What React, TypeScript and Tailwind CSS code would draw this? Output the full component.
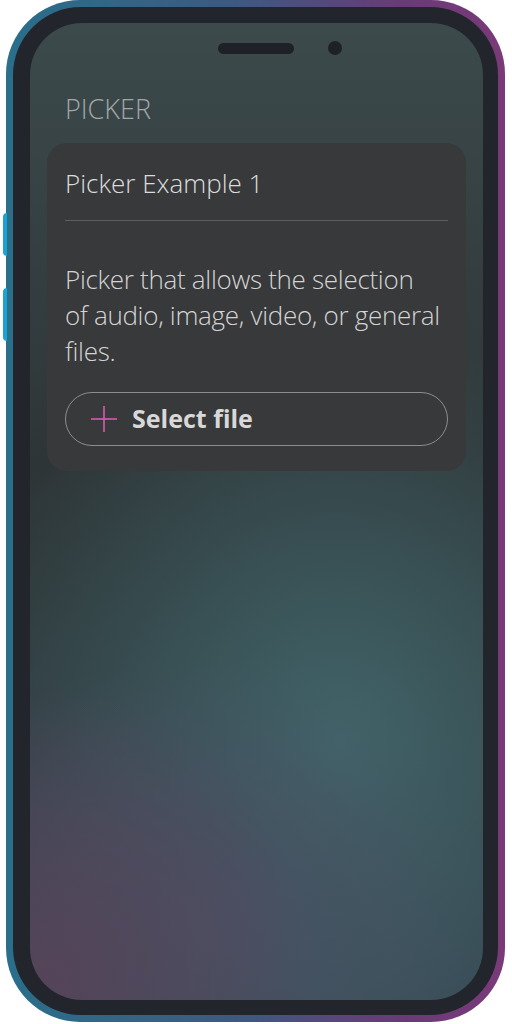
const font = { fontFamily: '"Open Sans", "Noto Sans", sans-serif' };

function PlusIcon() {
  return (
    <svg width="26" height="26" viewBox="0 0 26 26" fill="none" stroke="#d65cb0" strokeWidth="1.6">
      <line x1="13" y1="0" x2="13" y2="26" />
      <line x1="0" y1="13" x2="26" y2="13" />
    </svg>
  );
}

export default function App() {
  return (
    <div className="relative w-[512px] h-[1024px] bg-white" style={font}>
      {/* side buttons */}
      <div className="absolute left-[3px] top-[213px] w-[4px] h-[43px] rounded-l-sm bg-[#1ba3d3]" />
      <div className="absolute left-[3px] top-[288px] w-[4px] h-[53px] rounded-l-sm bg-[#1ba3d3]" />

      <div className="ml-[6px] w-[499px] h-[1022px] rounded-[74px] p-[7px] bg-[linear-gradient(90deg,#2a6f8a_0%,#3b5a82_45%,#6a3a78_80%,#7a3a78_100%)]">
        <div className="w-full h-full rounded-[68px] bg-[#22252c] pl-[17px] pr-[15px] pt-[16px] pb-[15px]">
          <div className="relative w-full h-full rounded-[52px] overflow-hidden bg-[radial-gradient(260px_300px_at_4%_98%,#554459,transparent),radial-gradient(280px_260px_at_38%_92%,#4a5164,transparent),radial-gradient(380px_440px_at_68%_74%,#416469,transparent),linear-gradient(180deg,#3c4a4c_0%,#2e3537_45%,#2f393b_60%,#364350_100%)]">
            <div className="flex items-center pt-[18px]">
              <div className="ml-[188px] w-[76px] h-[11px] rounded-full bg-[#1e2127]" />
              <div className="ml-[34px] w-[14px] h-[14px] rounded-full bg-[#1e2127]" />
            </div>

            <div className="pl-[35px] pt-[38px] text-[27px] leading-[32px] font-light text-[#a3a7a8]">
              PICKER
            </div>

            <div className="mx-[17px] mt-[18px] rounded-[20px] bg-[#38393b] pl-[18px] pr-[18px] pt-[24px] pb-[25px]">
              <div className="text-[26px] leading-[32px] font-light text-[#dcdcdc]">Picker Example 1</div>
              <div className="mt-[21px] h-px bg-[#5c5d5f]" />
              <p className="mt-[40px] text-[26px] leading-[36px] font-light tracking-[-0.3px] text-[#d4d4d4]">
                Picker that allows the selection
                <br />
                of audio, image, video, or general files.
              </p>
              <button className="mt-[23px] flex w-full h-[54px] items-center rounded-full border border-[#8d8d8f] pl-[25px] text-[25px] font-bold text-[#d8d8d8]">
                <PlusIcon />
                <span className="ml-[15px]">Select file</span>
              </button>
            </div>
          </div>
        </div>
      </div>
    </div>
  );
}
